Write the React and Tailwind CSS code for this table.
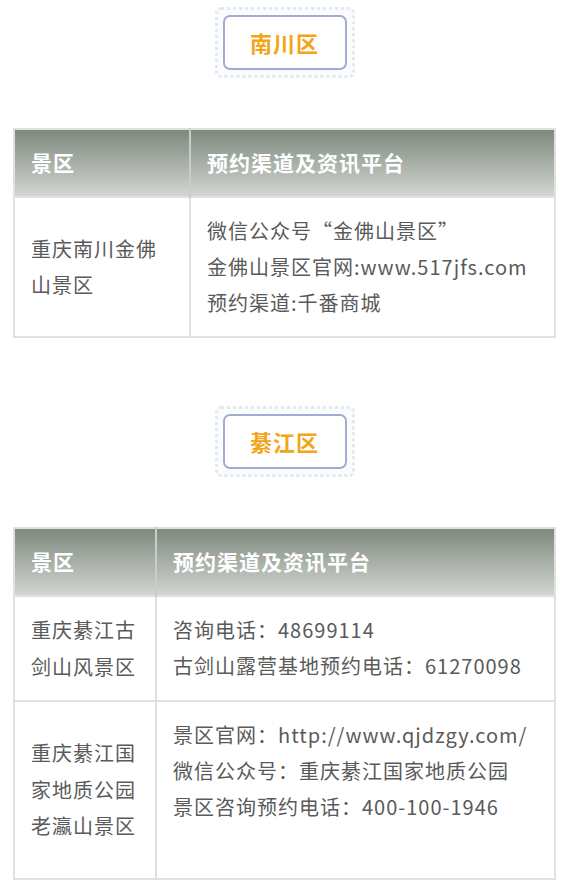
import React from "react";

const sections = [
  {
    name: "南川区",
    col1: "w-[176px]",
    rows: [
      {
        place: ["重庆南川金佛", "山景区"],
        info: ["微信公众号“金佛山景区”", "金佛山景区官网:www.517jfs.com", "预约渠道:千番商城"],
      },
    ],
  },
  {
    name: "綦江区",
    col1: "w-[142px]",
    rows: [
      {
        place: ["重庆綦江古", "剑山风景区"],
        info: ["咨询电话：48699114", "古剑山露营基地预约电话：61270098"],
      },
      {
        place: ["重庆綦江国", "家地质公园", "老瀛山景区"],
        info: ["景区官网：http://www.qjdzgy.com/", "微信公众号：重庆綦江国家地质公园", "景区咨询预约电话：400-100-1946", ""],
      },
    ],
  },
];

function Badge({ text }) {
  return (
    <div className="flex justify-center">
      <div className="rounded-md border-[3px] border-dotted border-[#e3e8f3] p-[5px] bg-[#fbfcfe]">
        <div className="w-[124px] h-[55px] rounded-[7px] border-2 border-[#a3acd0] bg-white flex items-center justify-center">
          <span className="text-[22px] font-bold text-[#f2a516] tracking-[1px]">{text}</span>
        </div>
      </div>
    </div>
  );
}

export default function App() {
  return (
    <div className="bg-white min-h-[891px] pt-[7px] font-['Noto_Sans_CJK_SC','Noto_Sans',sans-serif]">
      {sections.map((s, i) => (
        <div key={i} className={i === 0 ? "" : "mt-[68px]"}>
          <div className="ml-[13px] w-[543px]">
            <Badge text={s.name} />
            <table className="mt-[50px] w-full border-collapse border-2 border-[#e0e0e0] text-[20px] tracking-[1px]">
              <thead>
                <tr className="h-[68px] bg-gradient-to-b from-[#7d897d] to-[#d4d7d3] text-white text-left">
                  <th className={`${s.col1} pl-[16px] border-r-2 border-[#c9cdc8] text-[21px] font-bold`}>景区</th>
                  <th className="pl-[16px] text-[21px] font-bold">预约渠道及资讯平台</th>
                </tr>
              </thead>
              <tbody className="text-[#5a5a5a]">
                {s.rows.map((r, j) => (
                  <tr key={j} className="border-t-2 border-[#e0e0e0]">
                    <td className="pl-[16px] py-[15px] border-r-2 border-[#e0e0e0] align-middle leading-[36.5px]">
                      {r.place.map((l, k) => (
                        <div key={k}>{l}</div>
                      ))}
                    </td>
                    <td className="pl-[16px] py-[15px] align-top leading-[36px]">
                      {r.info.map((l, k) => (
                        <div key={k} className={`whitespace-nowrap ${l === "" ? "h-[38px]" : "h-[36px]"}`}>{l}</div>
                      ))}
                    </td>
                  </tr>
                ))}
              </tbody>
            </table>
          </div>
        </div>
      ))}
    </div>
  );
}
